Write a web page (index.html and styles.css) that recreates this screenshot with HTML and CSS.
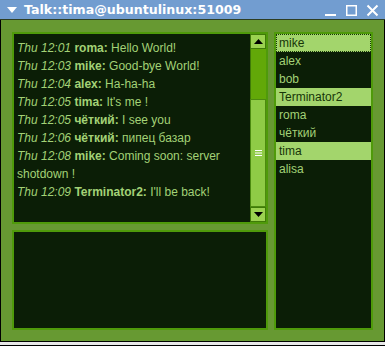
FILE: index.html
```html
<!DOCTYPE html>
<html>
<head>
<meta charset="utf-8">
<link rel="stylesheet" href="styles.css">
</head>
<body>
<div class="window">
  <div class="titlebar">
    <svg class="menu-arrow" width="10" height="8" viewBox="0 0 10 8"><polygon points="0,1 10,1 5,7" fill="#fff"/></svg>
    <span class="title">Talk::tima@ubuntulinux:51009</span>
    <div class="controls">
      <svg width="13" height="13" viewBox="0 0 13 13"><rect x="1" y="10" width="11" height="2" fill="#fff"/></svg>
      <svg width="13" height="13" viewBox="0 0 13 13"><rect x="1.75" y="1.75" width="9.5" height="9.5" fill="none" stroke="#fff" stroke-width="1.5"/></svg>
      <svg width="13" height="13" viewBox="0 0 13 13"><path d="M1.5 1.5 L11.5 11.5 M11.5 1.5 L1.5 11.5" stroke="#fff" stroke-width="2"/></svg>
    </div>
  </div>
  <div class="main">
    <div class="leftcol">
      <div class="panel chat">
        <div class="log">
          <div class="line"><i>Thu 12:01</i> <b>roma:</b> Hello World!</div>
          <div class="line"><i>Thu 12:03</i> <b>mike:</b> Good-bye World!</div>
          <div class="line"><i>Thu 12:04</i> <b>alex:</b> Ha-ha-ha</div>
          <div class="line"><i>Thu 12:05</i> <b>tima:</b> It's me !</div>
          <div class="line"><i>Thu 12:05</i> <b>чёткий:</b> I see you</div>
          <div class="line"><i>Thu 12:06</i> <b>чёткий:</b> пипец базар</div>
          <div class="line"><i>Thu 12:08</i> <b>mike:</b> Coming soon: server shotdown !</div>
          <div class="line"><i>Thu 12:09</i> <b>Terminator2:</b> I'll be back!</div>
        </div>
        <div class="scrollbar">
          <div class="sb-btn"><svg width="9" height="5" viewBox="0 0 9 5"><polygon points="4.5,0 9,5 0,5" fill="#000"/></svg></div>
          <div class="sb-trough"></div>
          <div class="sb-thumb"><svg width="7" height="6" viewBox="0 0 7 6"><rect y="0" width="7" height="1" fill="#fff"/><rect y="2.5" width="7" height="1" fill="#fff"/><rect y="5" width="7" height="1" fill="#fff"/></svg></div>
          <div class="sb-btn down"><svg width="9" height="5" viewBox="0 0 9 5"><polygon points="0,0 9,0 4.5,5" fill="#000"/></svg></div>
        </div>
      </div>
      <div class="panel input"></div>
    </div>
    <div class="panel users">
      <div class="user selected focus">mike</div>
      <div class="user">alex</div>
      <div class="user">bob</div>
      <div class="user selected">Terminator2</div>
      <div class="user">roma</div>
      <div class="user">чёткий</div>
      <div class="user selected">tima</div>
      <div class="user">alisa</div>
    </div>
  </div>
</div>
<div class="below"></div>
</body>
</html>
```
FILE: styles.css
```css
html, body {
  margin: 0;
  padding: 0;
  background: #e8e8e8;
}
body {
  width: 385px;
  height: 346px;
  overflow: hidden;
  font-family: "Liberation Sans", Arial, sans-serif;
  font-size: 12px;
}
.window {
  width: 385px;
}
.titlebar {
  height: 19px;
  background: #729dd0;
  border-bottom: 1px solid #2d3d22;
  display: flex;
  align-items: center;
  color: #fff;
}
.menu-arrow {
  margin-left: 7px;
  margin-right: 7px;
}
.title {
  font-family: "DejaVu Sans", sans-serif;
  font-weight: bold;
  font-size: 12.6px;
  line-height: 19px;
  flex: 1;
}
.controls {
  display: flex;
  gap: 8px;
  margin-right: 6px;
  margin-top: 2px;
}
.controls svg {
  display: block;
}
.main {
  display: flex;
  gap: 6px;
  padding: 12px 11px 11px 11px;
  background: #679932;
  border-left: 1px solid #000;
  border-right: 1px solid #000;
  border-bottom: 1px solid #000;
}
.leftcol {
  width: 256px;
  display: flex;
  flex-direction: column;
  gap: 6px;
}
.panel {
  border: 2px solid #4f9a0a;
  background: #0b1e06;
  box-sizing: border-box;
}
.chat {
  height: 192px;
  display: flex;
}
.input {
  height: 100px;
}
.users {
  width: 99px;
  height: 298px;
}
.log {
  flex: 1;
  padding: 5px 3px 0 3px;
  color: #a3d276;
  line-height: 18px;
  overflow: hidden;
}
.log i {
  font-style: italic;
}
.log b {
  font-weight: bold;
}
.scrollbar {
  width: 16px;
  display: flex;
  flex-direction: column;
}
.sb-btn {
  height: 15px;
  box-sizing: border-box;
  background: #9bd250;
  border: 1px solid #3f7a08;
  display: flex;
  align-items: center;
  justify-content: center;
}
.sb-trough {
  height: 50px;
  background: #62a808;
  border-left: 1px solid #3f7a08;
}
.sb-thumb {
  height: 108px;
  box-sizing: border-box;
  background: #8fcb46;
  border: 1px solid #4c8a10;
  display: flex;
  align-items: center;
  justify-content: center;
}
.user {
  height: 18px;
  line-height: 18px;
  padding-left: 3px;
  color: #a3d276;
  box-sizing: border-box;
}
.user.selected {
  background: #a3d56c;
  color: #173509;
}
.user.focus {
  border: 1px dotted #173509;
  line-height: 16px;
  padding-left: 2px;
}
.below {
  height: 3px;
  background: #e8e8e8;
  border-bottom: 1px solid #000;
}
```
